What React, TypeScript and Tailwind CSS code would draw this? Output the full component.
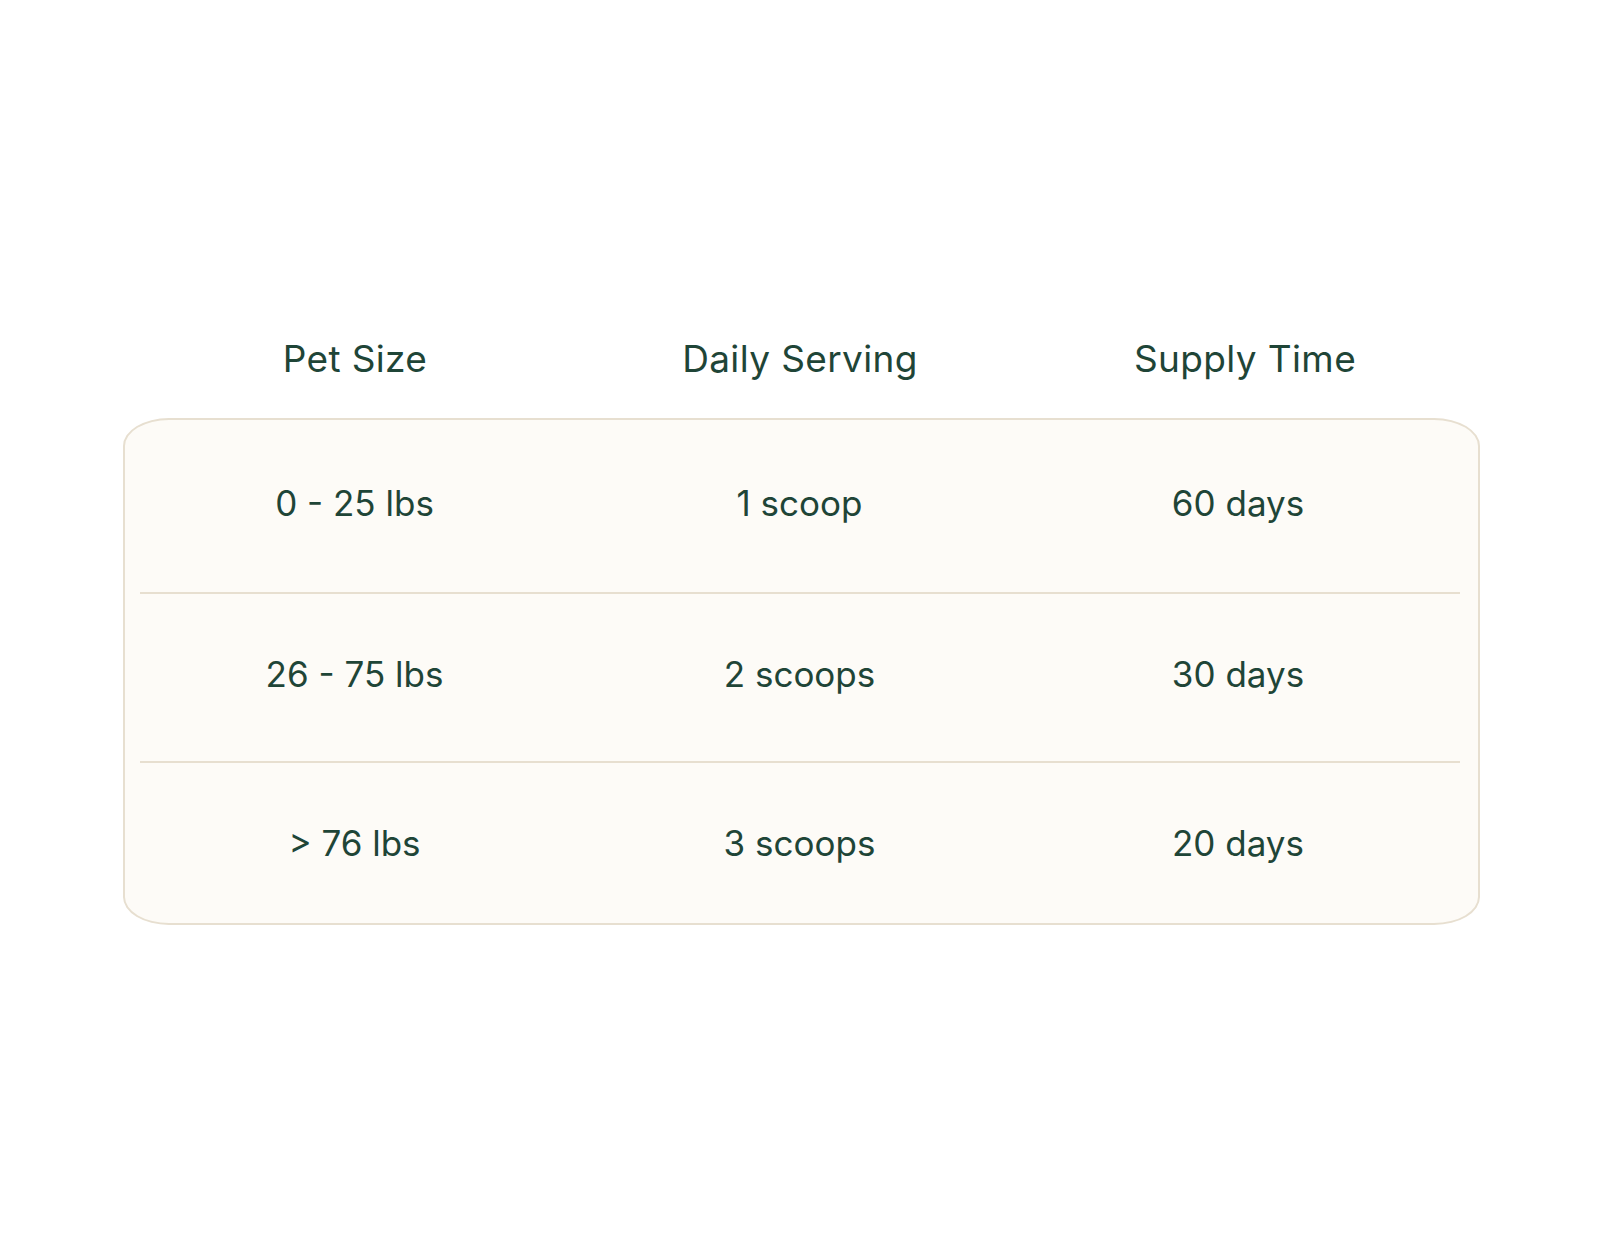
const rows = [
  { size: "0 - 25 lbs", serving: "1 scoop", supply: "60 days", h: "h-[172px] pb-[6px]" },
  { size: "26 - 75 lbs", serving: "2 scoops", supply: "30 days", h: "h-[167px] pb-[7px]" },
  { size: "> 76 lbs", serving: "3 scoops", supply: "20 days", h: "h-[160px]" },
];

export default function App() {
  return (
    <div className="min-h-[1250px] w-full bg-white pt-[329px] text-[#1f4537] font-['Inter',sans-serif]">
      {/* header */}
      <div className="mx-auto grid h-[60px] w-[1335px] grid-cols-3 items-center text-center text-[37px] tracking-[0.01em]">
        <div>Pet Size</div>
        <div>Daily Serving</div>
        <div>Supply Time</div>
      </div>

      {/* table */}
      <div className="ml-[123px] mt-[29px] w-[1357px] rounded-[46px/28px] border-2 border-[#e7dfd0] bg-[#fdfbf7] text-[35px]">
        {rows.map((row, i) => (
          <div key={row.size}>
            {i > 0 && <div className="ml-[15px] mr-[18px] h-[2px] bg-[#e7dfd0]" />}
            <div className={`grid grid-cols-[445px_445px_432px] items-center pl-[7px] text-center ${row.h}`}>
              <div>{row.size}</div>
              <div>{row.serving}</div>
              <div>{row.supply}</div>
            </div>
          </div>
        ))}
      </div>
    </div>
  );
}
